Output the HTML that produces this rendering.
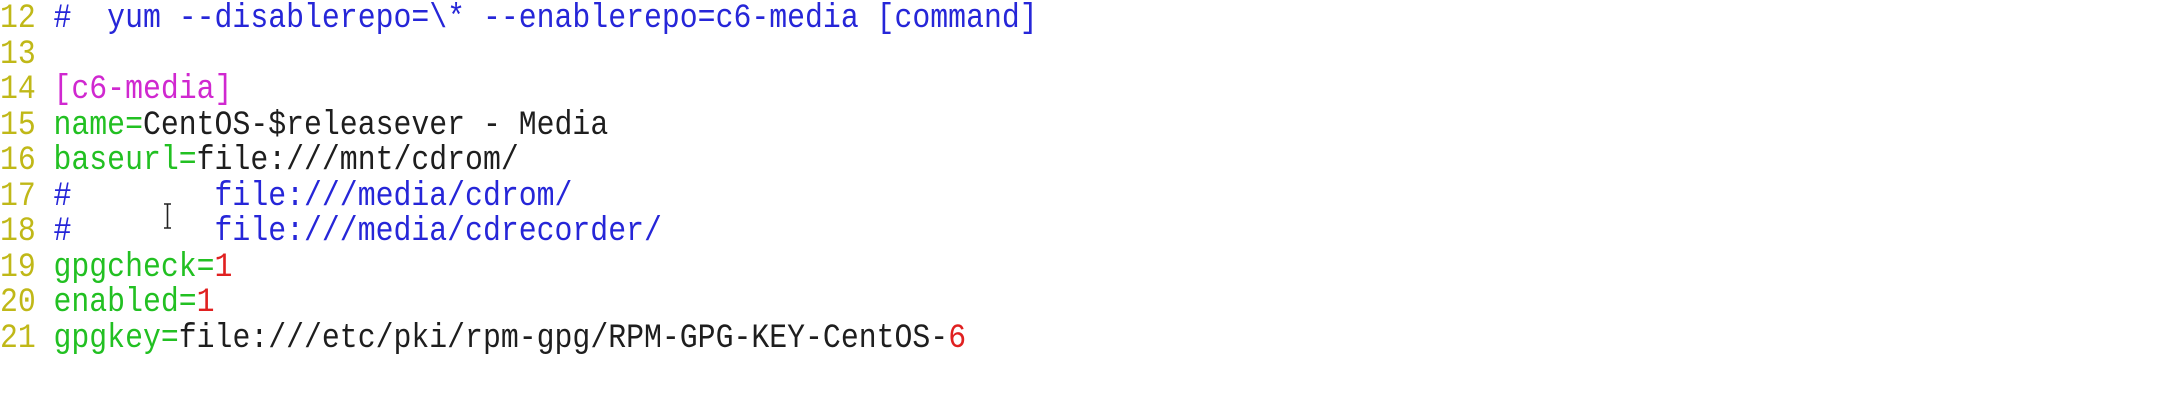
<!DOCTYPE html>
<html><head><meta charset="utf-8"><style>
html,body{margin:0;padding:0;background:#fff;width:2182px;height:408px;overflow:hidden}
.l{position:absolute;left:0;height:36px;white-space:pre;font-family:"Liberation Mono",monospace;font-size:34px;line-height:36px;color:#1e1e1e;transform:scaleX(0.877);transform-origin:0 0}
.t{position:absolute;left:61px;top:0}
.n{color:#c0b818}.c{color:#2626d8}.g{color:#22c022}.m{color:#d028d0}.r{color:#e02020}
.cur{position:absolute;left:163px;top:203px;width:9px;height:26px}
</style></head><body>
<div class="l" style="top:1px"><span class="n">12</span><span class="t c">#  yum --disablerepo=\* --enablerepo=c6-media [command]</span></div>
<div class="l" style="top:36.5px"><span class="n">13</span></div>
<div class="l" style="top:72px"><span class="n">14</span><span class="t m">[c6-media]</span></div>
<div class="l" style="top:107.5px"><span class="n">15</span><span class="t"><span class="g">name=</span>CentOS-$releasever - Media</span></div>
<div class="l" style="top:143px"><span class="n">16</span><span class="t"><span class="g">baseurl=</span>file:///mnt/cdrom/</span></div>
<div class="l" style="top:178.5px"><span class="n">17</span><span class="t c">#        file:///media/cdrom/</span></div>
<div class="l" style="top:214px"><span class="n">18</span><span class="t c">#        file:///media/cdrecorder/</span></div>
<div class="l" style="top:249.5px"><span class="n">19</span><span class="t"><span class="g">gpgcheck=</span><span class="r">1</span></span></div>
<div class="l" style="top:285px"><span class="n">20</span><span class="t"><span class="g">enabled=</span><span class="r">1</span></span></div>
<div class="l" style="top:320.5px"><span class="n">21</span><span class="t"><span class="g">gpgkey=</span>file:///etc/pki/rpm-gpg/RPM-GPG-KEY-CentOS-<span class="r">6</span></span></div>
<svg class="cur" viewBox="0 0 9 26"><path d="M1 1h7M4.5 1v24M1 25h7" stroke="#222" stroke-width="1.6" fill="none"/></svg>
</body></html>
